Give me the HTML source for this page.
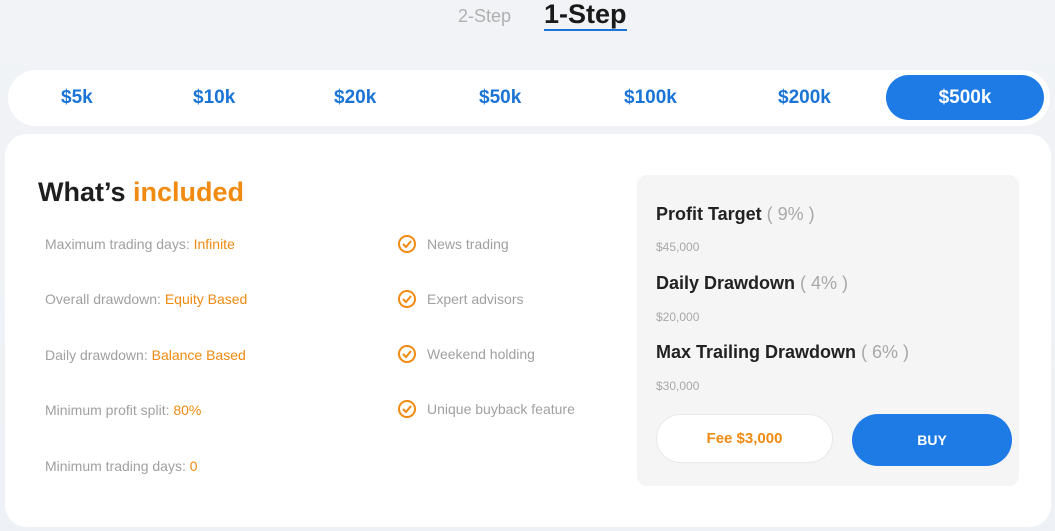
<!DOCTYPE html>
<html><head><style>
*{margin:0;padding:0;box-sizing:border-box}
body{width:1055px;height:531px;overflow:hidden;background:linear-gradient(180deg,#f1f3f6,#eef1f5);font-family:"Liberation Sans",sans-serif;position:relative}
.a{position:absolute;white-space:nowrap}
.tab{font-weight:bold;color:#1a74d6;font-size:19px;top:87px}
.l{font-size:14px;color:#a0a0a0}
.l b{font-weight:normal;color:#f08a10}
.h{font-size:18px;color:#222;font-weight:bold}
.h span{color:#a8a8a8;font-weight:normal}
.s{font-size:12px;color:#a8a8a8}
</style></head><body>
<div class="a" style="left:458px;top:6px;font-size:18px;color:#b0b0b0">2-Step</div>
<div class="a" style="left:544px;top:0px;font-size:27px;font-weight:bold;color:#1a1a1a;border-bottom:2px solid #1a74d6;line-height:29px">1-Step</div>
<div class="a" style="left:8px;top:70px;width:1042px;height:56px;background:#fff;border-radius:28px"></div>
<div class="a tab" style="left:61px">$5k</div>
<div class="a tab" style="left:193px">$10k</div>
<div class="a tab" style="left:334px">$20k</div>
<div class="a tab" style="left:479px">$50k</div>
<div class="a tab" style="left:624px">$100k</div>
<div class="a tab" style="left:778px">$200k</div>
<div class="a" style="left:886px;top:75px;width:158px;height:45px;background:#1e7be6;border-radius:23px;color:#fff;font-weight:bold;font-size:19px;text-align:center;line-height:45px">$500k</div>
<div class="a" style="left:5px;top:134px;width:1046px;height:393px;background:#fff;border-radius:22px"></div>
<div class="a" style="left:38px;top:177px;font-size:27px;font-weight:bold;color:#1e1e1e">What’s <span style="color:#f08a10">included</span></div>
<div class="a l" style="left:45px;top:236px">Maximum trading days: <b>Infinite</b></div>
<div class="a l" style="left:45px;top:291px">Overall drawdown: <b>Equity Based</b></div>
<div class="a l" style="left:45px;top:347px">Daily drawdown: <b>Balance Based</b></div>
<div class="a l" style="left:45px;top:402px">Minimum profit split: <b>80%</b></div>
<div class="a l" style="left:45px;top:458px">Minimum trading days: <b>0</b></div>
<svg class="a" style="left:397px;top:235px" width="20" height="190" viewBox="0 0 20 190" fill="none" stroke="#f08a10" stroke-width="2">
<g><circle cx="10" cy="9" r="8"/><path d="M6 9l3 3 5-6"/></g>
<g transform="translate(0,55)"><circle cx="10" cy="9" r="8"/><path d="M6 9l3 3 5-6"/></g>
<g transform="translate(0,110)"><circle cx="10" cy="9" r="8"/><path d="M6 9l3 3 5-6"/></g>
<g transform="translate(0,165)"><circle cx="10" cy="9" r="8"/><path d="M6 9l3 3 5-6"/></g>
</svg>
<div class="a l" style="left:427px;top:236px">News trading</div>
<div class="a l" style="left:427px;top:291px">Expert advisors</div>
<div class="a l" style="left:427px;top:346px">Weekend holding</div>
<div class="a l" style="left:427px;top:401px">Unique buyback feature</div>
<div class="a" style="left:637px;top:175px;width:382px;height:311px;background:#f5f5f5;border-radius:10px"></div>
<div class="a h" style="left:656px;top:204px">Profit Target <span>( 9% )</span></div>
<div class="a s" style="left:656px;top:240px">$45,000</div>
<div class="a h" style="left:656px;top:273px">Daily Drawdown <span>( 4% )</span></div>
<div class="a s" style="left:656px;top:310px">$20,000</div>
<div class="a h" style="left:656px;top:342px">Max Trailing Drawdown <span>( 6% )</span></div>
<div class="a s" style="left:656px;top:379px">$30,000</div>
<div class="a" style="left:656px;top:414px;width:177px;height:49px;border:1px solid #e8e8e8;background:#fff;border-radius:25px;text-align:center;line-height:47px;color:#f08a10;font-weight:bold;font-size:15px">Fee $3,000</div>
<div class="a" style="left:852px;top:414px;width:160px;height:52px;background:#1e7be6;border-radius:26px;text-align:center;line-height:52px;color:#fff;font-weight:bold;font-size:14px">BUY</div>
</body></html>
